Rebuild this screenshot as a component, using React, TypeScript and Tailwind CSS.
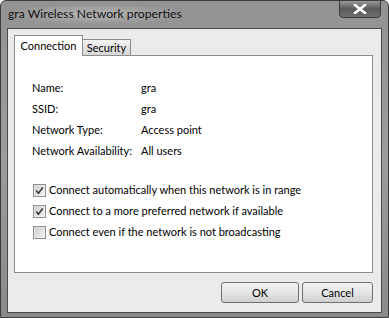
import React from "react";

const font = { fontFamily: 'Lato, "Liberation Sans", sans-serif' };

function Check({ checked }: { checked: boolean }) {
  return (
    <div className="w-[13px] h-[13px] shrink-0 border border-[#8e8f8f] bg-gradient-to-br from-[#dcdcdc] to-[#f8f8f8] flex items-center justify-center">
      <div className="w-[9px] h-[9px] bg-gradient-to-br from-[#cfcfcf] to-[#f2f2f2] flex items-center justify-center">
        {checked && (
          <svg width="9" height="9" viewBox="0 0 9 9">
            <path d="M1.2 4.6 L3.4 7.2 L7.8 1.4" fill="none" stroke="#3a3a3a" strokeWidth="1.6" />
          </svg>
        )}
      </div>
    </div>
  );
}

export default function App() {
  const rows: [string, string][] = [
    ["Name:", "gra"],
    ["SSID:", "gra"],
    ["Network Type:", "Access point"],
    ["Network Availability:", "All users"],
  ];
  const checks: [boolean, string][] = [
    [true, "Connect automatically when this network is in range"],
    [true, "Connect to a more preferred network if available"],
    [false, "Connect even if the network is not broadcasting"],
  ];
  return (
    <div
      className="w-[389px] h-[318px] bg-gradient-to-b from-[#939393] via-[#9c9c9c] to-[#8a8a8a] border border-[#3c3c3c] rounded-t-[6px] flex flex-col text-[11px] text-black overflow-hidden whitespace-nowrap"
      style={font}
    >
      <div className="h-[27px] flex items-start justify-between pl-[2px] pr-[7px]">
        <div className="mt-[3px] px-[5px] text-[12.2px] text-[#111] leading-[20px] bg-[radial-gradient(ellipse_at_center,rgba(255,255,255,0.3),rgba(255,255,255,0)_72%)]">
          gra Wireless Network properties
        </div>
        <div className="w-[42px] h-[18px] -mt-px rounded-b-[4px] border border-[#3a3a3a] bg-gradient-to-b from-[#9a9a9a] via-[#5a5a5a] to-[#6e6e6e] flex items-center justify-center">
          <svg width="14" height="10" viewBox="0 0 14 10">
            <path d="M2 1 L12 9 M12 1 L2 9" stroke="#ffffff" strokeWidth="2.6" strokeLinecap="square" />
          </svg>
        </div>
      </div>
      <div className="mx-[6px] mb-[4px] flex-1 border border-[#4a4a4a] bg-[#ebebeb] flex flex-col">
        <div className="pl-[6px] pr-[8px] pt-[6px] flex flex-col">
          <div className="flex items-end h-[21px] relative z-10">
            <div className="w-[69px] h-[21px] border border-[#8c8c8c] border-b-0 bg-white flex items-center justify-center leading-none pb-[2px]">
              Connection
            </div>
            <div className="w-[48px] h-[17px] border border-[#8c8c8c] border-l-0 bg-gradient-to-b from-[#f2f2f2] to-[#d6d6d6] flex items-center justify-center leading-none">
              Security
            </div>
          </div>
          <div className="h-[218px] -mt-px border border-[#8c8c8c] bg-white pl-[17px] pt-[22px]">
            <div className="flex flex-col">
              {rows.map(([k, v]) => (
                <div key={k} className="flex h-[21px] items-center">
                  <div className="w-[109px]">{k}</div>
                  <div>{v}</div>
                </div>
              ))}
            </div>
            <div className="flex flex-col mt-[18px]">
              {checks.map(([c, t]) => (
                <div key={t} className="flex h-[21px] items-center gap-[3px] pl-px">
                  <Check checked={c} />
                  <div>{t}</div>
                </div>
              ))}
            </div>
          </div>
        </div>
        <div className="flex justify-end gap-[3px] pr-[8px] mt-[9px]">
          <button className="w-[78px] h-[21px] rounded-[3px] border border-[#707070] bg-gradient-to-b from-[#f2f2f2] via-[#e6e6e6] to-[#cfcfcf] leading-none">
            OK
          </button>
          <button className="w-[71px] h-[21px] rounded-[3px] border border-[#707070] bg-gradient-to-b from-[#f2f2f2] via-[#e6e6e6] to-[#cfcfcf] leading-none">
            Cancel
          </button>
        </div>
      </div>
    </div>
  );
}
